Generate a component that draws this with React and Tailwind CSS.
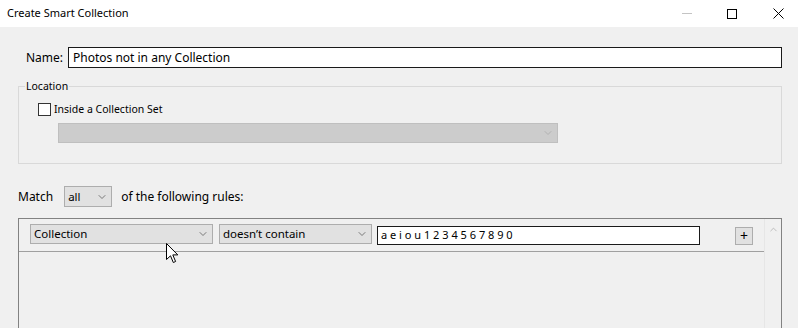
import { ChevronDown, ChevronUp } from 'lucide-react';

// Small windows-style select box
function Select({ label, className, disabled }) {
  return (
    <div
      className={
        'flex items-center justify-between border pl-[3px] pr-[3px] ' +
        (disabled ? 'bg-[#cccccc] border-[#bfbfbf]' : 'bg-[#e1e1e1] border-[#adadad]') +
        ' ' + className
      }
    >
      <span className="text-[11.5px] leading-none text-black">{label}</span>
      <ChevronDown
        size={12}
        strokeWidth={1.5}
        className={disabled ? 'text-[#a8a8a8]' : 'text-[#555555]'}
      />
    </div>
  );
}

export default function App() {
  return (
    <div className="w-[798px] h-[328px] overflow-hidden bg-[#f0f0f0] relative font-['Noto_Sans',sans-serif] text-black">
      {/* Title bar */}
      <div className="h-[27px] bg-white flex items-center">
        <span className="pl-[7px] text-[11px] flex-1">Create Smart Collection</span>
        <div className="flex items-center h-full pr-[14px]">
          <div className="w-[10px] h-px bg-[#c4c4c4]" />
          <div className="ml-[35px] w-[10px] h-[10px] border border-black" />
          <svg className="ml-[36px]" width="11" height="11" viewBox="0 0 11 11">
            <path d="M0.5 0.5 L10.5 10.5 M10.5 0.5 L0.5 10.5" stroke="#000" strokeWidth="1" />
          </svg>
        </div>
      </div>

      <div className="pl-[18px] pr-[16px]">
        {/* Name */}
        <div className="mt-[20px] flex items-center h-[21px]">
          <span className="w-[50px] pl-[8px] text-[12px]">Name:</span>
          <div className="flex-1 h-[21px] border border-[#1a1a1a] bg-white flex items-center pl-[4px] text-[12px]">
            Photos not in any Collection
          </div>
        </div>

        {/* Location group */}
        <fieldset className="mt-[11px] border border-[#d9d9d9] h-[85px]">
          <legend className="ml-[6px] px-[1px] text-[10.5px] leading-[14px]">Location</legend>
          <div className="pl-[19px] pt-[10px]">
            <div className="flex items-center h-[13px]">
              <div className="w-[13px] h-[13px] border border-[#333333] bg-white" />
              <span className="ml-[3px] text-[10.5px]">Inside a Collection Set</span>
            </div>
            <Select label="" disabled className="mt-[7px] ml-[20px] w-[500px] h-[20px]" />
          </div>
        </fieldset>

        {/* Match row */}
        <div className="mt-[22px] flex items-center h-[21px]">
          <span className="text-[12px]">Match</span>
          <Select label="all" className="ml-[11px] w-[48px] h-[21px]" />
          <span className="ml-[9px] text-[12px]">of the following rules:</span>
        </div>

        {/* Rules box */}
        <div className="mt-[11px] h-[120px] border border-[#828282] flex">
          <div className="flex-1">
            <div className="flex items-start pl-[11px] pt-[5px] h-[33px] border-b border-[#a0a0a0]">
              <Select label="Collection" className="w-[183px] h-[20px]" />
              <Select label="doesn’t contain" className="ml-[6px] w-[153px] h-[20px]" />
              <div className="ml-[5px] mt-[2px] w-[323px] h-[19px] border border-[#1a1a1a] bg-white flex items-center pl-[3px] text-[11px]">
                a e i o u 1 2 3 4 5 6 7 8 9 0
              </div>
              <div className="ml-[35px] mt-[3px] w-[18px] h-[18px] border border-[#adadad] bg-[#e1e1e1] flex items-center justify-center text-[14px] leading-none">
                +
              </div>
            </div>
          </div>
          <div className="w-[17px] border-l border-[#e6e6e6] flex justify-center pt-[5px]">
            <ChevronUp size={11} strokeWidth={1.5} className="text-[#a6a6a6]" />
          </div>
        </div>
      </div>

      {/* mouse cursor */}
      <svg className="absolute left-[166px] top-[243px]" width="13" height="21" viewBox="0 0 13 21">
        <path
          d="M0.5 0.5 L0.5 16.5 L4.5 12.8 L7.3 19.5 L9.6 18.5 L6.8 11.9 L11.8 11.9 Z"
          fill="#fff"
          stroke="#000"
          strokeWidth="1"
          strokeLinejoin="round"
        />
      </svg>
    </div>
  );
}
